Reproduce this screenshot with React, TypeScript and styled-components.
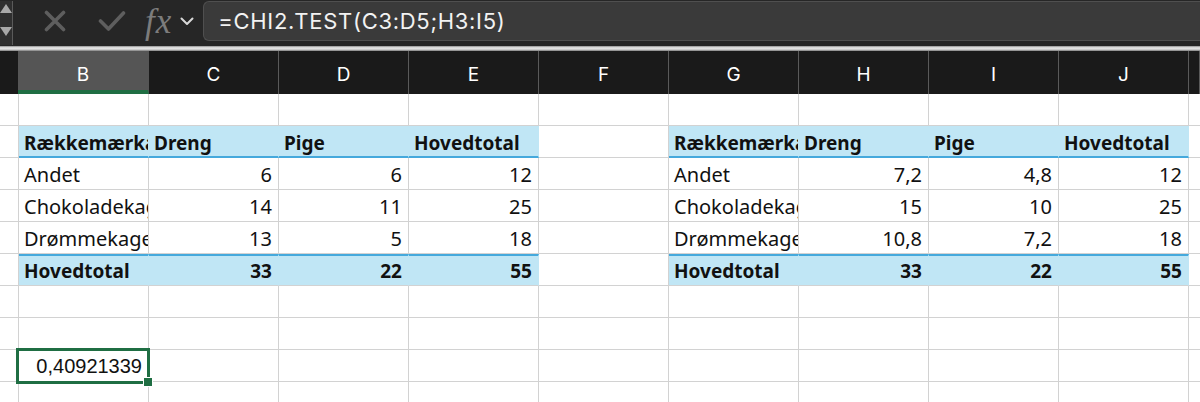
import React, { FC } from 'react';
import styled, { createGlobalStyle, css } from 'styled-components';

const GlobalStyle = createGlobalStyle`
  html, body {
    margin: 0;
    padding: 0;
    background: #ffffff;
    overflow: hidden;
  }
  * { box-sizing: border-box; }
`;

const COLS = '19px repeat(9, 130px) 1fr';
const BLUE_FILL = '#c0e6f5';
const BLUE_LINE = '#45a9dc';
const GRID = '#d2d2d2';
const GREEN = '#1f6e43';

const Screen = styled.div`
  width: 1200px;
  height: 402px;
  overflow: hidden;
  display: flex;
  flex-direction: column;
  & > * { flex-shrink: 0; }
`;

const FormulaBar = styled.div`
  height: 46px;
  background: #262626;
  display: flex;
  align-items: center;
  padding-bottom: 4px;
`;

const NameStub = styled.div`
  width: 13px;
  height: 44px;
  margin-top: 4px;
  background: #2f2f2f;
  border-right: 1px solid #5a5a5a;
  display: flex;
  flex-direction: column;
  justify-content: space-between;
  padding: 3px 0 9px;
`;

const Arrow = styled.div<{ $down?: boolean }>`
  width: 0;
  height: 0;
  border-left: 6px solid transparent;
  border-right: 6px solid transparent;
  ${({ $down }) => ($down
        ? css`border-top: 9px solid #a8a8a8;`
        : css`border-bottom: 9px solid #a8a8a8;`)}
`;

const ToolIcon = styled.div<{ $gap: number }>`
  margin-left: ${({ $gap }) => $gap}px;
  display: flex;
  align-items: center;
`;

const Fx = styled.span`
  margin-left: 19px;
  font-family: "Liberation Serif", "DejaVu Serif", serif;
  font-style: italic;
  font-size: 35px;
  color: #7c7c7c;
  line-height: 1;
  letter-spacing: 1px;
`;

const FormulaInput = styled.div`
  flex: 1;
  height: 40px;
  margin-left: 9px;
  background: #3a3a3a;
  border: 1px solid #4f4f4f;
  border-right: none;
  border-radius: 6px 0 0 6px;
  display: flex;
  align-items: center;
  padding-left: 14px;
  font-family: Inter, "Liberation Sans", sans-serif;
  font-size: 22px;
  letter-spacing: 0.7px;
  color: #f2f2f2;
`;

const Divider = styled.div`
  height: 5px;
  background: linear-gradient(#8f8f8f 0, #d8d8d8 30%, #e6e6e6 60%, #7a7a7a 100%);
`;

const HeaderRow = styled.div`
  display: grid;
  grid-template-columns: ${COLS};
  height: 43px;
  background: #1a1a1a;
`;

const ColHead = styled.div<{ $selected?: boolean; $corner?: boolean }>`
  display: flex;
  align-items: center;
  justify-content: center;
  font-family: Inter, "Liberation Sans", sans-serif;
  font-size: 19px;
  color: #ffffff;
  border-right: 1px solid #5a5a5a;
  padding-top: 3px;
  ${({ $corner }) => $corner && css`border-right: none;`}
  ${({ $selected }) => $selected && css`
    background: #555555;
    border-bottom: 4px solid ${GREEN};
    border-right: 1px solid #555555;
    margin-left: -1px;
    padding-top: 7px;
  `}
`;

const Sheet = styled.div`
  display: grid;
  grid-template-columns: ${COLS};
  grid-auto-rows: 32px;
`;

type Kind = 'plain' | 'head' | 'body' | 'total';

const Cell = styled.div<{ $kind: Kind; $num?: boolean }>`
  position: relative;
  display: flex;
  align-items: flex-end;
  justify-content: ${({ $num }) => ($num ? 'flex-end' : 'flex-start')};
  padding: 0 6px 2px 5px;
  white-space: nowrap;
  overflow: hidden;
  background: #ffffff;
  border-right: 1px solid ${GRID};
  border-bottom: 1px solid ${GRID};
  font-family: "Noto Sans", "Open Sans", sans-serif;
  font-size: 20px;
  line-height: 1.2;
  color: #111111;
  ${({ $kind }) => $kind === 'head' && css`
    background: ${BLUE_FILL};
    border-right-color: ${BLUE_FILL};
    border-bottom: 2px solid ${BLUE_LINE};
    font-weight: 700;
    font-size: 19px;
    padding-bottom: 1px;
  `}
  ${({ $kind }) => $kind === 'total' && css`
    background: ${BLUE_FILL};
    border-right-color: ${BLUE_FILL};
    border-top: 2px solid ${BLUE_LINE};
    font-weight: 700;
    font-size: 19px;
  `}
`;

const ActiveCell = styled(Cell)`
  overflow: visible;
  font-family: "Liberation Sans", Arial, sans-serif;
  font-size: 20px;
  padding-bottom: 3px;
  z-index: 2;
`;

const SelectionFrame = styled.div`
  position: absolute;
  top: -2px;
  left: -3px;
  right: -2px;
  bottom: -3px;
  border: 3px solid ${GREEN};
  pointer-events: none;
`;

const FillHandle = styled.div`
  position: absolute;
  right: -5px;
  bottom: -6px;
  width: 10px;
  height: 10px;
  background: ${GREEN};
  border: 1px solid #ffffff;
`;

type Spec = { t?: string; k?: Kind; n?: boolean };

const pivot = (rows: string[][]): Spec[][] => rows.map((r, i) => {
    const kind: Kind = i === 0 ? 'head' : i === rows.length - 1 ? 'total' : 'body';
    return r.map((t, j) => ({ t, k: kind, n: j > 0 && i > 0 }));
});

const left = pivot([
    ['Rækkemærkater', 'Dreng', 'Pige', 'Hovedtotal'],
    ['Andet', '6', '6', '12'],
    ['Chokoladekage', '14', '11', '25'],
    ['Drømmekager', '13', '5', '18'],
    ['Hovedtotal', '33', '22', '55'],
]);

const right = pivot([
    ['Rækkemærkater', 'Dreng', 'Pige', 'Hovedtotal'],
    ['Andet', '7,2', '4,8', '12'],
    ['Chokoladekage', '15', '10', '25'],
    ['Drømmekager', '10,8', '7,2', '18'],
    ['Hovedtotal', '33', '22', '55'],
]);

const letters = ['B', 'C', 'D', 'E', 'F', 'G', 'H', 'I', 'J', ''];
const empty = (): Spec => ({});

const buildRows = (): Spec[][] => {
    const rows: Spec[][] = [];
    for (let r = 0; r < 10; r += 1) {
        const row: Spec[] = [empty()];
        const p = r - 1;
        if (p >= 0 && p < 5) {
            row.push(...left[p], empty(), ...right[p], empty());
        } else {
            for (let c = 0; c < 10; c += 1) row.push(empty());
        }
        rows.push(row);
    }
    return rows;
};

const XIcon: FC = () => (
    <svg width="22" height="22" viewBox="0 0 22 22">
        <path d="M2.5 2.5 L19.5 19.5 M19.5 2.5 L2.5 19.5" stroke="#5e5e5e" strokeWidth="3.6" strokeLinecap="round" />
    </svg>
);

const CheckIcon: FC = () => (
    <svg width="28" height="22" viewBox="0 0 28 22">
        <path d="M2.5 11 L10.5 19 L25.5 3" stroke="#5e5e5e" strokeWidth="3.6" strokeLinecap="round" strokeLinejoin="round" fill="none" />
    </svg>
);

const Chevron: FC = () => (
    <svg width="14" height="9" viewBox="0 0 14 9">
        <path d="M1.5 1.5 L7 7 L12.5 1.5" stroke="#d8d8d8" strokeWidth="2" strokeLinecap="round" strokeLinejoin="round" fill="none" />
    </svg>
);

const App: FC = () => {
    const rows = buildRows();
    return (
        <Screen>
            <GlobalStyle />
            <FormulaBar>
                <NameStub>
                    <Arrow />
                    <Arrow $down />
                </NameStub>
                <ToolIcon $gap={31}><XIcon /></ToolIcon>
                <ToolIcon $gap={32}><CheckIcon /></ToolIcon>
                <Fx>fx</Fx>
                <ToolIcon $gap={8}><Chevron /></ToolIcon>
                <FormulaInput>=CHI2.TEST(C3:D5;H3:I5)</FormulaInput>
            </FormulaBar>
            <Divider />
            <HeaderRow>
                <ColHead $corner />
                {letters.map((l, i) => <ColHead key={`h${i}`} $selected={l === 'B'}>{l}</ColHead>)}
            </HeaderRow>
            <Sheet>
                {rows.map((row, r) => row.map((c, ci) => {
                    if (r === 8 && ci === 1) {
                        return (
                            <ActiveCell key={`${r}-${ci}`} $kind="plain" $num>
                                0,40921339
                                <SelectionFrame />
                                <FillHandle />
                            </ActiveCell>
                        );
                    }
                    return (
                        <Cell key={`${r}-${ci}`} $kind={c.k ?? 'plain'} $num={c.n}>
                            {c.t}
                        </Cell>
                    );
                }))}
            </Sheet>
        </Screen>
    );
};

export default App;
